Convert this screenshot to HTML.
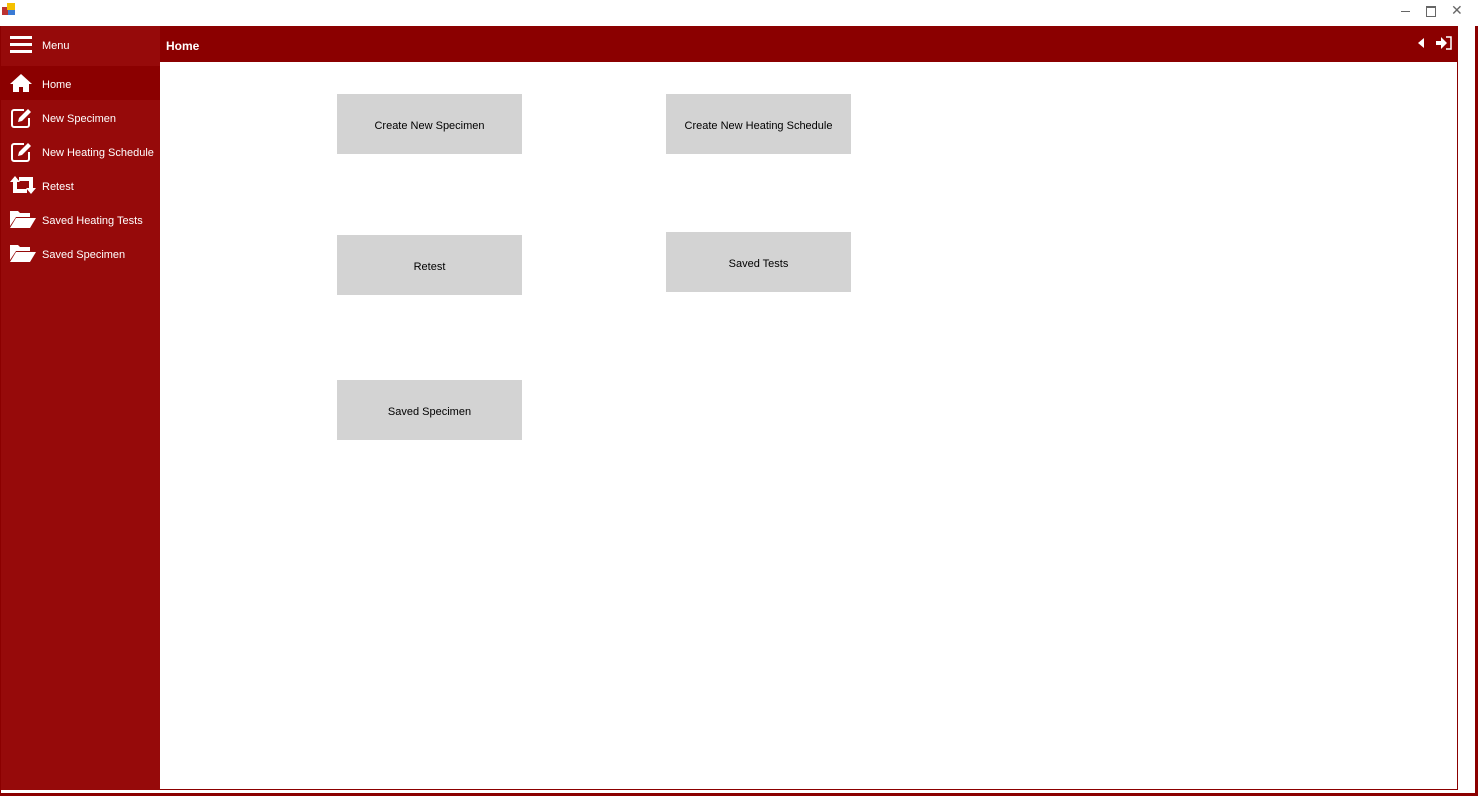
<!DOCTYPE html>
<html><head><style>
body{margin:0;width:1478px;height:796px;position:relative;background:#fff;font-family:"Liberation Sans",sans-serif;overflow:hidden}
.a{position:absolute}
.side{left:1px;top:26px;width:159px;height:764px;background:#960a0a}
.hdr{left:160px;top:26px;width:1298px;height:36px;background:#8b0000}
.cont{left:160px;top:62px;width:1297px;height:727px;background:#fff;border-right:1px solid #8b0000;border-bottom:1px solid #8b0000}
.item{position:absolute;left:0;width:159px;height:34px;color:#fff;font-size:11px;line-height:38px}
.item span{position:absolute;left:41px}
.item svg{position:absolute;left:9px;top:7px}
.btn{position:absolute;width:185px;height:60px;background:#d3d3d3;font-size:11px;color:#000;text-align:center;line-height:64px}
</style></head><body>
<div class="a" style="left:2px;top:3px;width:14px;height:13px">
<div class="a" style="left:0;top:4px;width:6px;height:8px;background:#b33"></div>
<div class="a" style="left:5px;top:0;width:8px;height:7px;background:#f5c000"></div>
<div class="a" style="left:6px;top:7px;width:7px;height:5px;background:#3a7bd5"></div></div>
<div class="a" style="left:1401px;top:11px;width:9px;height:1px;background:#666"></div>
<div class="a" style="left:1426px;top:6px;width:8px;height:8px;border:1px solid #666;border-top-width:2px"></div>
<div class="a" style="left:1451px;top:2px;color:#666;font-size:14px">✕</div>
<div class="a" style="left:1475px;top:26px;width:3px;height:770px;background:#8b0000"></div>
<div class="a" style="left:0;top:793px;width:1478px;height:3px;background:#8b0000"></div>
<div class="a" style="left:0;top:26px;width:1px;height:767px;background:#8b0000"></div>
<div class="a side">
 <div class="item" style="top:0;height:40px;line-height:40px"><svg width="22" height="20" viewBox="0 0 22 20" style="top:9px"><rect y="1" width="22" height="3" fill="#fff"/><rect y="8" width="22" height="3" fill="#fff"/><rect y="15" width="22" height="3" fill="#fff"/></svg><span>Menu</span></div>
 <div class="item" style="top:40px;background:#8b0000"><svg width="22" height="20" viewBox="0 0 22 20"><path d="M11 1L0 11h3v8h6v-5h4v5h6v-8h3z" fill="#fff"/></svg><span>Home</span></div>
 <div class="item" style="top:74px"><svg width="24" height="22" viewBox="0 0 24 22"><path d="M14 3H4a2 2 0 0 0-2 2v13a2 2 0 0 0 2 2h13a2 2 0 0 0 2-2v-7" stroke="#fff" stroke-width="2" fill="none"/><path d="M8 15l1-4 9-9 3 3-9 9z" fill="#fff"/></svg><span>New Specimen</span></div>
 <div class="item" style="top:108px"><svg width="24" height="22" viewBox="0 0 24 22"><path d="M14 3H4a2 2 0 0 0-2 2v13a2 2 0 0 0 2 2h13a2 2 0 0 0 2-2v-7" stroke="#fff" stroke-width="2" fill="none"/><path d="M8 15l1-4 9-9 3 3-9 9z" fill="#fff"/></svg><span>New Heating Schedule</span></div>
 <div class="item" style="top:142px"><svg width="26" height="20" viewBox="0 0 26 20"><path d="M5 1L0 7h3v11h14v-4H7V7h3z" fill="#fff"/><path d="M21 19l5-6h-3V2H9v4h10v7h-3z" fill="#fff"/></svg><span>Retest</span></div>
 <div class="item" style="top:176px"><svg width="26" height="20" viewBox="0 0 26 20"><path d="M0 2h8l2 2h10v4H6L0 17z" fill="#fff"/><path d="M6 9h20l-6 10H0z" fill="#fff"/></svg><span>Saved Heating Tests</span></div>
 <div class="item" style="top:210px"><svg width="26" height="20" viewBox="0 0 26 20"><path d="M0 2h8l2 2h10v4H6L0 17z" fill="#fff"/><path d="M6 9h20l-6 10H0z" fill="#fff"/></svg><span>Saved Specimen</span></div>
</div>
<div class="a hdr"><div class="a" style="left:6px;top:13px;color:#fff;font-weight:bold;font-size:12px">Home</div>
<svg class="a" style="left:1257px;top:12px" width="8" height="10"><path d="M7 0v10L1 5z" fill="#fff"/></svg>
<svg class="a" style="left:1276px;top:10px" width="16" height="14" viewBox="0 0 16 14"><path d="M0 5h5V1l6 6-6 6V9H0z" fill="#fff"/><path d="M10 1h5v12h-5" stroke="#fff" stroke-width="1.5" fill="none"/></svg>
</div>
<div class="a cont">
 <div class="btn" style="left:177px;top:32px">Create New Specimen</div>
 <div class="btn" style="left:506px;top:32px">Create New Heating Schedule</div>
 <div class="btn" style="left:177px;top:173px">Retest</div>
 <div class="btn" style="left:506px;top:170px">Saved Tests</div>
 <div class="btn" style="left:177px;top:318px">Saved Specimen</div>
</div>
</body></html>
